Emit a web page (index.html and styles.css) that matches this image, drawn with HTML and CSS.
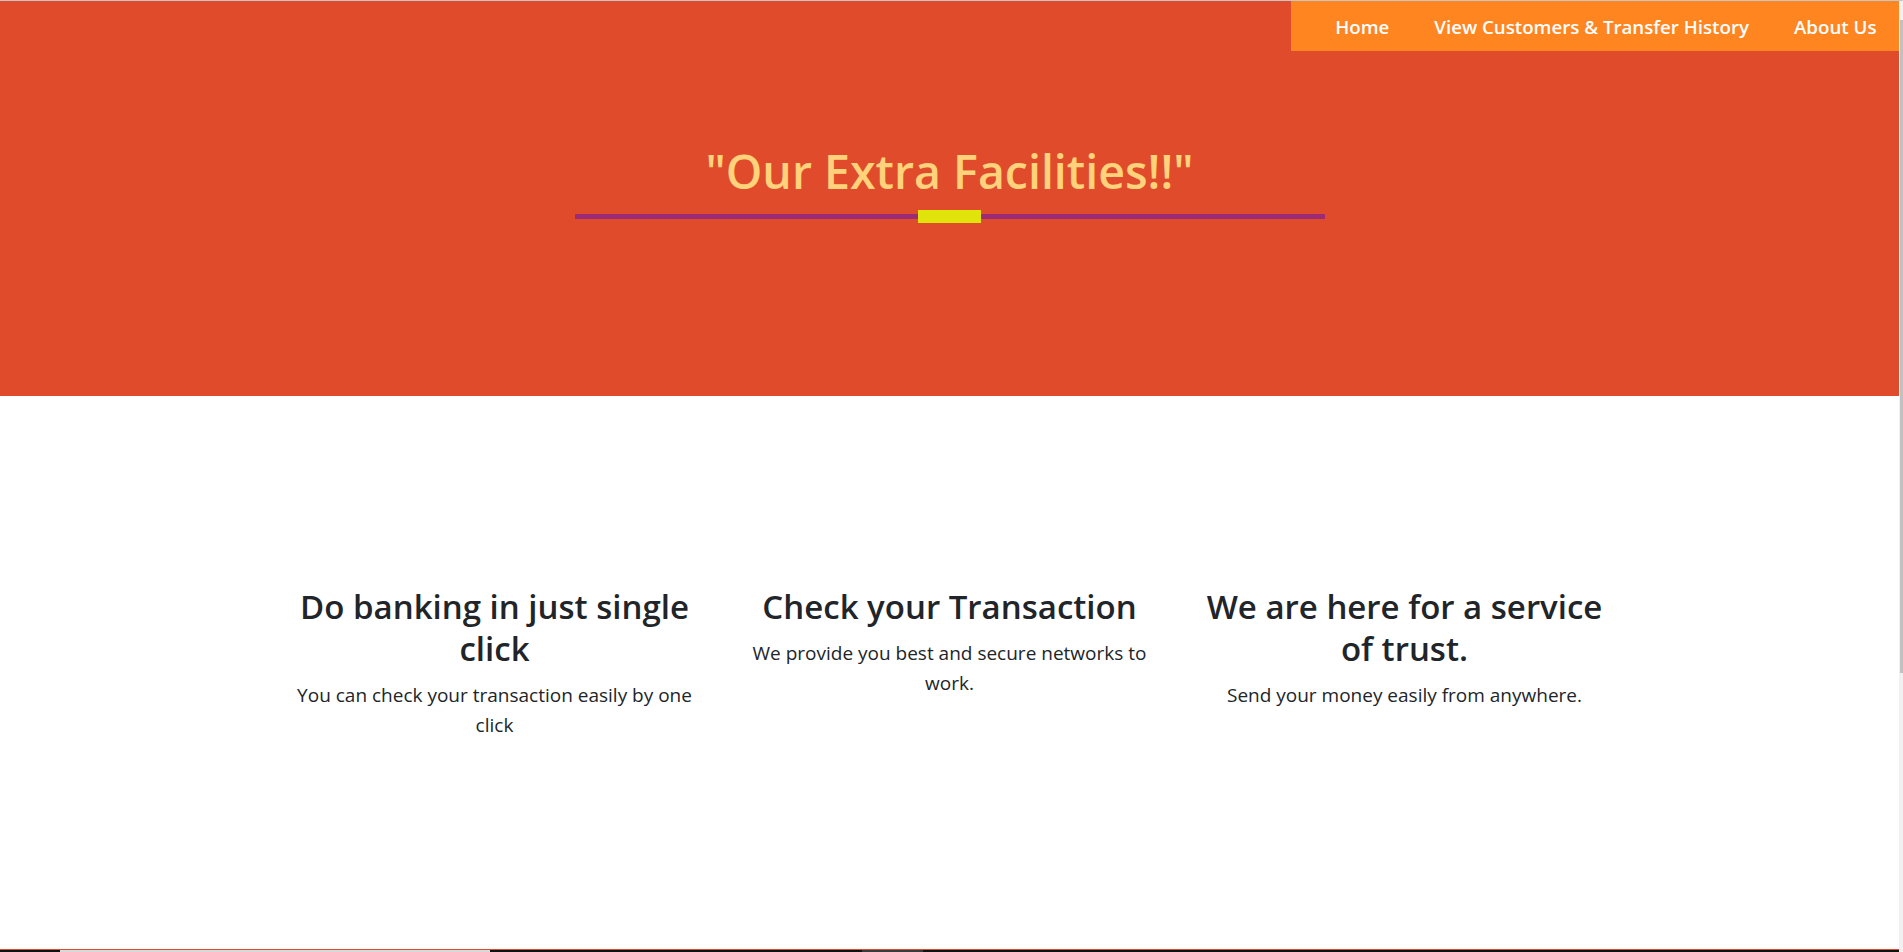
FILE: index.html
```html
<!DOCTYPE html>
<html lang="en">
<head>
<meta charset="utf-8">
<title>Our Extra Facilities</title>
<link rel="stylesheet" href="styles.css">
</head>
<body>
<div class="frame">
  <div class="page">
    <header class="hero">
      <nav class="nav">
        <a class="nav-link" href="#">Home</a>
        <a class="nav-link" href="#">View Customers &amp; Transfer History</a>
        <a class="nav-link" href="#">About Us</a>
      </nav>
      <div class="hero-title">
        <h1 class="title">"Our Extra Facilities!!"</h1>
        <div class="rule"><span class="rule-mark"></span></div>
      </div>
    </header>
    <section class="features">
      <div class="feature">
        <h2 class="feature-title">Do banking in just single click</h2>
        <p class="feature-text">You can check your transaction easily by one click</p>
      </div>
      <div class="feature">
        <h2 class="feature-title">Check your Transaction</h2>
        <p class="feature-text">We provide you best and secure networks to work.</p>
      </div>
      <div class="feature">
        <h2 class="feature-title">We are here for a service of trust.</h2>
        <p class="feature-text">Send your money easily from anywhere.</p>
      </div>
    </section>
    <section class="next">
      <div class="shot shot-light"></div>
      <div class="shot shot-dark"></div>
    </section>
  </div>
  <div class="scrollbar"><div class="thumb"></div></div>
</div>
</body>
</html>
```

FILE: styles.css
```css
html, body {
  margin: 0;
  height: 100%;
  overflow: hidden;
}
body {
  font-family: "Open Sans", "Noto Sans", sans-serif;
  color: #212529;
  background: #fff;
}
.frame {
  display: flex;
  height: 952px;
  border-top: 1px solid #c6c6c6;
  box-sizing: border-box;
}
.page {
  flex: 1;
  min-width: 0;
  overflow: hidden;
}
.scrollbar {
  width: 4px;
  background: #f1f1f1;
  display: flex;
  justify-content: flex-end;
  align-items: flex-start;
}
.thumb {
  width: 3px;
  height: 653px;
  margin-top: 19px;
  background: #c1c1c1;
}

/* hero */
.hero {
  background: #e04c2b;
  height: 395px;
  display: flex;
  flex-direction: column;
}
.nav {
  align-self: flex-end;
  display: flex;
  align-items: center;
  height: 50px;
  padding: 1px 0 0 22px;
  box-sizing: border-box;
  background: #ff8520;
}
.nav-link {
  padding: 0 22.5px;
  color: #fff;
  text-decoration: none;
  font-weight: 600;
  font-size: 18.7px;
}
.hero-title {
  display: flex;
  flex-direction: column;
  align-items: center;
  margin-top: 93px;
}
.title {
  margin: 0;
  font-size: 46.5px;
  line-height: 1.2;
  font-weight: 600;
  color: #ffd27b;
}
.rule {
  margin-top: 10px;
  width: 750px;
  height: 13px;
  display: flex;
  align-items: center;
  justify-content: center;
  background: linear-gradient(#9b2b75, #9b2b75) center / 100% 5px no-repeat;
}
.rule-mark {
  width: 63px;
  height: 13px;
  background: #e1e40a;
}

/* features */
.features {
  height: 553px;
  box-sizing: border-box;
  padding-top: 190px;
  display: grid;
  grid-template-columns: repeat(3, 455px);
  justify-content: center;
  align-content: start;
}
.feature {
  padding: 0 12px;
  text-align: center;
}
.feature-title {
  margin: 0 0 10px;
  font-size: 33px;
  line-height: 42px;
  font-weight: 600;
}
.feature-text {
  margin: 0;
  font-size: 19px;
  line-height: 30px;
}

/* next section peeking */
.next {
  height: 300px;
  border-top: 1px solid #e04c2b;
  background: #111;
  display: flex;
  align-items: flex-start;
}
.shot {
  height: 300px;
}
.shot-light {
  margin-left: 60px;
  width: 430px;
  background: #d8d8d8;
}
.shot-dark {
  margin-left: 372px;
  width: 61px;
  background: #3a3a3a;
}
```
